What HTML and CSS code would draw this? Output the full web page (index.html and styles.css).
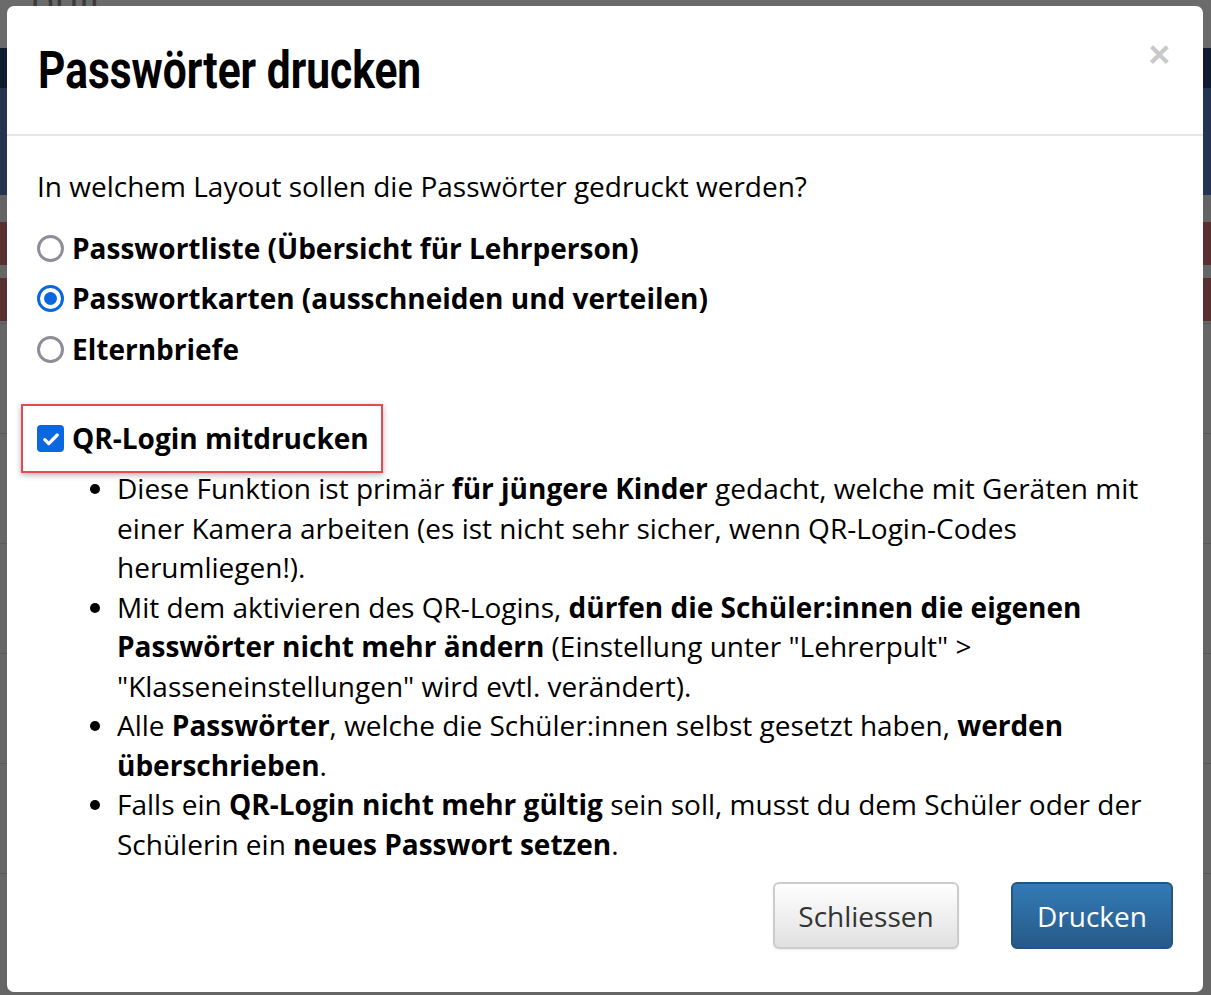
FILE: index.html
```html
<!DOCTYPE html>
<html lang="de">
<head>
<meta charset="utf-8">
<title>Passwörter drucken</title>
<link rel="stylesheet" href="styles.css">
</head>
<body>
<div class="page">
  <div class="bg-top"><span class="bg-word">pult</span></div>
  <div class="bg-nav"></div>
  <div class="bg-sub"></div>
  <div class="bg-gap"></div>
  <div class="bg-red"></div>
  <div class="bg-gap2"></div>
  <div class="bg-red"></div>
  <div class="bg-rows">
    <div class="bg-row"></div>
    <div class="bg-row"></div>
    <div class="bg-row"></div>
    <div class="bg-row"></div>
    <div class="bg-row"></div>
    <div class="bg-row"></div>
  </div>
</div>

<div class="modal">
  <div class="modal-header">
    <h1 class="modal-title"><span class="title-text">Passwörter drucken</span></h1>
    <span class="close">×</span>
  </div>
  <div class="modal-body">
    <p class="question">In welchem Layout sollen die Passwörter gedruckt werden?</p>
    <div class="options">
      <label class="opt"><span class="radio"></span><span>Passwortliste (Übersicht für Lehrperson)</span></label>
      <label class="opt"><span class="radio checked"></span><span>Passwortkarten (ausschneiden und verteilen)</span></label>
      <label class="opt"><span class="radio"></span><span>Elternbriefe</span></label>
    </div>
    <div class="qr-box">
      <label class="opt"><span class="checkbox"><svg viewBox="0 0 16 16" width="20" height="20"><path d="M3 8.5l3.2 3.2L13 4.8" fill="none" stroke="#fff" stroke-width="2.6" stroke-linecap="round" stroke-linejoin="round"/></svg></span><span>QR-Login mitdrucken</span></label>
    </div>
    <ul class="notes">
      <li>Diese Funktion ist primär <b>für jüngere Kinder</b> gedacht, welche mit Geräten mit einer Kamera arbeiten (es ist nicht sehr sicher, wenn QR-Login-Codes herumliegen!).</li>
      <li>Mit dem aktivieren des QR-Logins, <b>dürfen die Schüler:innen die eigenen Passwörter nicht mehr ändern</b> (Einstellung unter "Lehrerpult" &gt; "Klasseneinstellungen" wird evtl. verändert).</li>
      <li>Alle <b>Passwörter</b>, welche die Schüler:innen selbst gesetzt haben, <b>werden überschrieben</b>.</li>
      <li>Falls ein <b>QR-Login nicht mehr gültig</b> sein soll, musst du dem Schüler oder der Schülerin ein <b>neues Passwort setzen</b>.</li>
    </ul>
  </div>
  <div class="modal-footer">
    <button class="btn btn-default">Schliessen</button>
    <button class="btn btn-primary">Drucken</button>
  </div>
</div>
</body>
</html>
```

FILE: styles.css
```css
html, body {
  margin: 0;
  padding: 0;
}
body {
  background: #666666;
  font-family: "Open Sans", "Liberation Sans", sans-serif;
  width: 1211px;
  height: 995px;
  overflow: hidden;
  position: relative;
}
.page {
  display: flex;
  flex-direction: column;
}
.bg-top {
  height: 48px;
  background: #6b6b6b;
}
.bg-word {
  display: block;
  font-family: "Open Sans", sans-serif;
  font-size: 40px;
  color: #3a3a3a;
  line-height: 40px;
  margin-top: -20px;
  margin-left: 30px;
}
.bg-nav { height: 40px; background: #0f1b2f; }
.bg-sub { height: 107px; background: #243450; }
.bg-gap { height: 27px; background: #646464; }
.bg-red { height: 43px; background: #57302f; }
.bg-gap2 { height: 13px; background: #666; }
.bg-rows {
  display: flex;
  flex-direction: column;
  padding-top: 2px;
}
.bg-row {
  height: 109px;
  border-top: 1px solid #595959;
}

.modal {
  position: absolute;
  left: 7px;
  top: 6px;
  width: 1196px;
  height: 986px;
  background: #fff;
  border-radius: 7px;
  box-sizing: border-box;
  display: flex;
  flex-direction: column;
}
.modal-header {
  height: 130px;
  box-sizing: border-box;
  border-bottom: 2px solid #e5e5e5;
  display: flex;
  align-items: flex-start;
  justify-content: space-between;
  padding: 0 31px 0 31px;
}
.modal-title {
  margin: 0;
  padding-top: 35px;
  font-family: Roboto, "Liberation Sans", sans-serif;
  font-weight: 700;
  font-size: 51px;
  line-height: 60px;
  color: #000;
}
.title-text {
  display: inline-block;
  transform: scaleX(0.833);
  transform-origin: left center;
  white-space: nowrap;
}
.close {
  font-family: "Liberation Sans", Arial, sans-serif;
  font-weight: 700;
  font-size: 37px;
  line-height: 37px;
  color: #c9c9c9;
  margin-top: 30px;
  margin-right: 2px;
}
.modal-body {
  padding: 31px 31px 0 30px;
  font-size: 28px;
  line-height: 39.5px;
  color: #000;
}
.question {
  margin: 0 0 22px 0;
}
.options {
  display: flex;
  flex-direction: column;
  gap: 11px;
}
.opt {
  display: flex;
  align-items: center;
  font-weight: 700;
  gap: 8px;
}
.radio {
  width: 27px;
  height: 27px;
  box-sizing: border-box;
  border: 3px solid #8f8d98;
  border-radius: 50%;
  flex: none;
  display: flex;
  align-items: center;
  justify-content: center;
}
.radio.checked {
  border-color: #0b67df;
}
.radio.checked::after {
  content: "";
  width: 13px;
  height: 13px;
  border-radius: 50%;
  background: #0b67df;
}
.checkbox {
  width: 27px;
  height: 27px;
  border-radius: 4px;
  background: #0b67df;
  flex: none;
  display: flex;
  align-items: center;
  justify-content: center;
}
.qr-box {
  display: inline-flex;
  margin: 35px 0 -4px -16px;
  padding: 12px 12px 12px 14px;
  border: 2px solid #e64a4f;
  box-shadow: 0 2px 6px rgba(0, 0, 0, 0.3);
}
.qr-box .opt {
  line-height: 41px;
}
.notes {
  margin: 0;
  padding-left: 80px;
  padding-right: 30px;
}
.notes b {
  font-weight: 700;
}
.modal-footer {
  display: flex;
  justify-content: flex-end;
  gap: 52px;
  padding: 18px 30px 0 0;
}
.btn {
  font-family: "Open Sans", "Liberation Sans", sans-serif;
  font-size: 28px;
  height: 67px;
  border-radius: 6px;
  padding: 0 20px;
  cursor: pointer;
}
.btn-default {
  width: 186px;
  color: #333;
  background: linear-gradient(#ffffff, #e0e0e0);
  border: 2px solid #cccccc;
  box-shadow: 0 1px 2px rgba(0, 0, 0, 0.08);
}
.btn-primary {
  width: 162px;
  color: #fff;
  background: linear-gradient(#337ab7, #265a88);
  border: 2px solid #245580;
}
```
